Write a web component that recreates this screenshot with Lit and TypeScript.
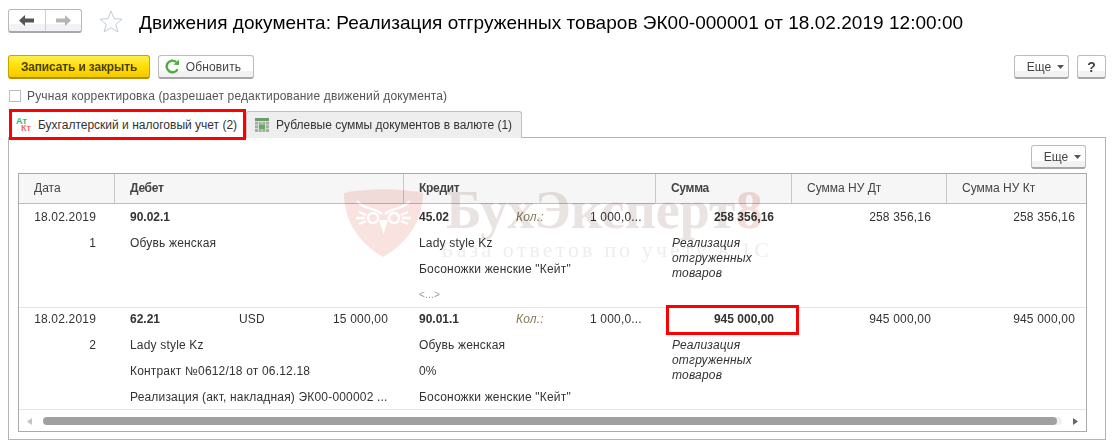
import { LitElement, html, css } from "lit";
import { customElement } from "lit/decorators.js";

const caret = html`<svg class="caret" width="7" height="4" viewBox="0 0 7 4"><path d="M0 0H7L3.5 4Z" fill="#555"/></svg>`;

@customElement("app-root")
export class AppRoot extends LitElement {
  static styles = css`
    :host { display: block; width: 1113px; height: 446px; overflow: hidden; background: #fff; font-family: "Liberation Sans", Arial, sans-serif; font-size: 12px; color: #333; }
    * { box-sizing: border-box; }
    .top { display: flex; align-items: center; padding: 9px 0 0 8px; height: 33px; }
    .nav { display: flex; width: 74px; height: 24px; border: 1px solid #b9b9b9; border-bottom: 2px solid #a8a8a8; border-radius: 3px; background: linear-gradient(#fff 68%, #f1f1f6 68%); }
    .nav div { flex: 1; display: flex; align-items: center; justify-content: center; }
    .nav div + div { border-left: 1px solid #d0d0d0; }
    .star { margin-left: 17px; }
    h1 { margin: 3px 0 0 16px; font-size: 19px; font-weight: 400; letter-spacing: 0.03px; color: #000; white-space: nowrap; }
    .actions { display: flex; align-items: flex-start; margin-top: 22px; padding: 0 7px 0 8px; gap: 8px; }
    .btn { display: flex; align-items: center; justify-content: center; height: 24px; border: 1px solid #bcbcbc; border-bottom: 2px solid #a6a6a6; border-radius: 3px; background: linear-gradient(#fff 72%, #f2f2f2 72%); color: #444; white-space: nowrap; }
    .save { width: 142px; background: linear-gradient(#ffef4a, #ffdd00 55%, #f6c800); border-color: #c8a400; border-bottom-color: #b08f00; font-weight: 700; letter-spacing: -0.15px; color: #4a4000; }
    .refresh { width: 96px; gap: 6px; padding-right: 6px; letter-spacing: 0.15px; }
    .spacer { flex: 1; }
    .more { width: 55px; gap: 6px; padding-left: 8px; }
    .help { width: 29px; font-weight: 700; font-size: 14px; }
    .check { display: flex; align-items: center; gap: 6px; margin-top: 11px; padding-left: 9px; height: 12px; letter-spacing: 0.15px; color: #555; }
    .box { width: 12px; height: 12px; border: 1px solid #bdbdbd; }
    .tabs { position: relative; z-index: 1; display: flex; align-items: flex-start; margin-top: 7px; padding-left: 9px; height: 31px; }
    .tab { display: flex; align-items: center; white-space: nowrap; }
    .tab.active { width: 237px; height: 31px; padding-left: 4px; gap: 7px; border: 3px solid #f00; background: #fff; }
    .tab.other { width: 276px; height: 27px; margin-top: 2px; padding-left: 8px; gap: 7px; border: 1px solid #c0c0c0; border-bottom: 0; border-radius: 3px 3px 0 0; background: #eee; }
    .tab svg { flex: none; }
    .dtkt { flex: none; display: grid; font-size: 9px; line-height: 7px; font-weight: 700; width: 15px; }
    .dtkt .g { color: #3cb371; }
    .dtkt .r { color: #ee6b6b; padding-left: 5px; }
    .panel { position: relative; margin: -3px 7px 0 8px; height: 303px; border: 1px solid #b3b3b3; }
    .panelbar { display: flex; justify-content: flex-end; padding: 7px 19px 4px 0; }
    .grid { position: relative; margin: 0 18px 0 9px; height: 259px; border: 1px solid #a9a9a9; overflow: hidden; }
    .row { display: grid; grid-template-columns: 95px 289px 252px 136px 155px 139px; }
    .head { height: 30px; background: #f6f6f6; border-bottom: 1px solid #bdbdbd; line-height: 28px; color: #444; }
    .head div { padding-left: 15px; }
    .head div + div { border-left: 1px solid #c8c8c8; }
    .head .b { font-weight: 700; letter-spacing: -0.3px; }
    .body { height: 104px; border-bottom: 1px solid #e4e4e4; letter-spacing: 0.18px; }
    .body.second { height: 102px; }
    .body.second .line:first-child { height: 24px; line-height: 22px; }
    .line { height: 26px; line-height: 26px; white-space: nowrap; }
    .date { padding: 0 18px 0 15px; text-align: right; }
    .left { padding: 0 15px 0 16px; }
    .split { display: flex; }
    .code { flex: none; width: 109px; font-weight: 700; letter-spacing: 0; }
    .cur { flex: 1; }
    .qty { flex: none; width: 74px; font-style: italic; color: #85795a; }
    .cred .code { width: 97px; }
    .sum { position: relative; padding: 0 17px 0 17px; }
    .sum .line:first-child { text-align: right; font-weight: 700; letter-spacing: 0; }
    .note { margin-top: 6px; line-height: 15px; font-style: italic; white-space: normal; }
    .num { padding-right: 15px; text-align: right; }
    .num.last { padding-right: 10px; }
    .dots { color: #999; font-size: 10px; }
    .redbox { position: absolute; left: 11px; top: -3px; width: 133px; height: 30px; border: 3px solid #f00; }
    .scroll { display: flex; align-items: center; height: 22px; padding: 0 8px; gap: 11px; }
    .track { flex: 1; height: 8px; padding-right: 5px; background: #f1f1f1; border-radius: 4px; }
    .thumb { height: 8px; background: #a0a0a0; border-radius: 4px; }
    .wm { position: absolute; left: 325px; top: 14px; display: flex; gap: 22px; pointer-events: none; mix-blend-mode: multiply; font-family: "Liberation Serif", serif; white-space: nowrap; }
    .wm-title { margin-top: -3px; font-size: 54px; line-height: 50px; font-weight: 700; color: #e9e3e1; }
    .wm-title span { color: #f3dcd9; }
    .wm-sub { margin: 3px 0 0 -5px; font-size: 22px; line-height: 24px; letter-spacing: 3.1px; color: #eeeeee; }
  `;

  render() {
    return html`
      <div class="top">
        <div class="nav">
          <div><svg width="15" height="11" viewBox="0 0 15 11"><path d="M0 5.5 6 0V3.5H15V7.5H6V11Z" fill="#555"/></svg></div>
          <div><svg width="15" height="11" viewBox="0 0 15 11"><path d="M15 5.5 9 0V3.5H0V7.5H9V11Z" fill="#b5b5b5"/></svg></div>
        </div>
        <svg class="star" width="24" height="23" viewBox="0 0 24 23"><path d="M12 1 15 8.6 23 9.2 16.8 14.3 18.9 22 12 17.7 5.1 22 7.2 14.3 1 9.2 9 8.6Z" fill="#fff" stroke="#c3ccd4"/></svg>
        <h1>Движения документа: Реализация отгруженных товаров ЭК00-000001 от 18.02.2019 12:00:00</h1>
      </div>
      <div class="actions">
        <div class="btn save">Записать и закрыть</div>
        <div class="btn refresh">
          <svg width="15" height="15" viewBox="0 0 15 15"><path d="M12.6 10.2A5.8 5.8 0 1 1 11.2 3" fill="none" stroke="#4caf3c" stroke-width="2.4"/><path d="M8.5 5.8 14 6V.5Z" fill="#4caf3c"/></svg>
          Обновить
        </div>
        <div class="spacer"></div>
        <div class="btn more">Еще ${caret}</div>
        <div class="btn help">?</div>
      </div>
      <div class="check"><div class="box"></div>Ручная корректировка (разрешает редактирование движений документа)</div>
      <div class="tabs">
        <div class="tab active">
          <div class="dtkt"><span class="g">Ат</span><span class="r">Кт</span></div>
          Бухгалтерский и налоговый учет (2)
        </div>
        <div class="tab other">
          <svg width="14" height="14" viewBox="0 0 14 14"><rect width="14" height="14" fill="#a9aca6"/><rect width="14" height="3" fill="#6f9a6a"/><path d="M0 3.5H14M0 7H14M0 10.5H14M3.5 3V14M7 3V14M10.5 3V14" stroke="#e4e6e2" stroke-width=".8"/><rect x="4" y="6.5" width="6" height="4.5" fill="#5fb25a"/></svg>
          Рублевые суммы документов в валюте (1)
        </div>
      </div>
      <div class="panel">
        <div class="panelbar"><div class="btn more">Еще ${caret}</div></div>
        <div class="grid">
          <div class="row head">
            <div>Дата</div><div class="b">Дебет</div><div class="b">Кредит</div><div class="b">Сумма</div><div>Сумма НУ Дт</div><div>Сумма НУ Кт</div>
          </div>
          <div class="row body">
            <div class="date"><div class="line">18.02.2019</div><div class="line">1</div></div>
            <div class="left">
              <div class="line split"><span class="code">90.02.1</span></div>
              <div class="line">Обувь женская</div>
            </div>
            <div class="left cred">
              <div class="line split"><span class="code">45.02</span><span class="qty">Кол.:</span><span>1 000,0...</span></div>
              <div class="line">Lady style Kz</div>
              <div class="line">Босоножки женские "Кейт"</div>
              <div class="line dots">&lt;...&gt;</div>
            </div>
            <div class="sum">
              <div class="line">258 356,16</div>
              <div class="note">Реализация отгруженных товаров</div>
            </div>
            <div class="num"><div class="line">258 356,16</div></div>
            <div class="num last"><div class="line">258 356,16</div></div>
          </div>
          <div class="row body second">
            <div class="date"><div class="line">18.02.2019</div><div class="line">2</div></div>
            <div class="left">
              <div class="line split"><span class="code">62.21</span><span class="cur">USD</span><span>15 000,00</span></div>
              <div class="line">Lady style Kz</div>
              <div class="line">Контракт №0612/18 от 06.12.18</div>
              <div class="line">Реализация (акт, накладная) ЭК00-000002 ...</div>
            </div>
            <div class="left cred">
              <div class="line split"><span class="code">90.01.1</span><span class="qty">Кол.:</span><span>1 000,0...</span></div>
              <div class="line">Обувь женская</div>
              <div class="line">0%</div>
              <div class="line">Босоножки женские "Кейт"</div>
            </div>
            <div class="sum">
              <div class="line">945 000,00</div>
              <div class="note">Реализация отгруженных товаров</div>
              <div class="redbox"></div>
            </div>
            <div class="num"><div class="line">945 000,00</div></div>
            <div class="num last"><div class="line">945 000,00</div></div>
          </div>
          <div class="scroll">
            <svg width="5" height="7" viewBox="0 0 5 7"><path d="M5 0V7L0 3.5Z" fill="#c4c4c4"/></svg>
            <div class="track"><div class="thumb"></div></div>
            <svg width="5" height="7" viewBox="0 0 5 7"><path d="M0 0V7L5 3.5Z" fill="#666"/></svg>
          </div>
          <div class="wm">
            <svg width="80" height="70" viewBox="0 0 80 70">
              <path d="M0 5C26 0 54 0 79 5 79 34 62 56 39 69 16 56 0 34 0 5Z" fill="#f9e3e0"/>
              <g fill="none" stroke="#fff" stroke-width="2.4"><circle cx="29" cy="30" r="5"/><circle cx="50" cy="30" r="5"/><path d="M13 13C20 22 30 19 38 26M66 13C59 22 49 19 41 26M12 30H21M58 30H67M15 24 22 27M64 24 57 27M15 36 22 33M64 36 57 33"/></g>
              <path d="M35 32H44L39.5 46Z" fill="#fff"/>
            </svg>
            <div>
              <div class="wm-title">БухЭксперт<span>8</span></div>
              <div class="wm-sub">База ответов по учету в 1С</div>
            </div>
          </div>
        </div>
      </div>
    `;
  }
}
